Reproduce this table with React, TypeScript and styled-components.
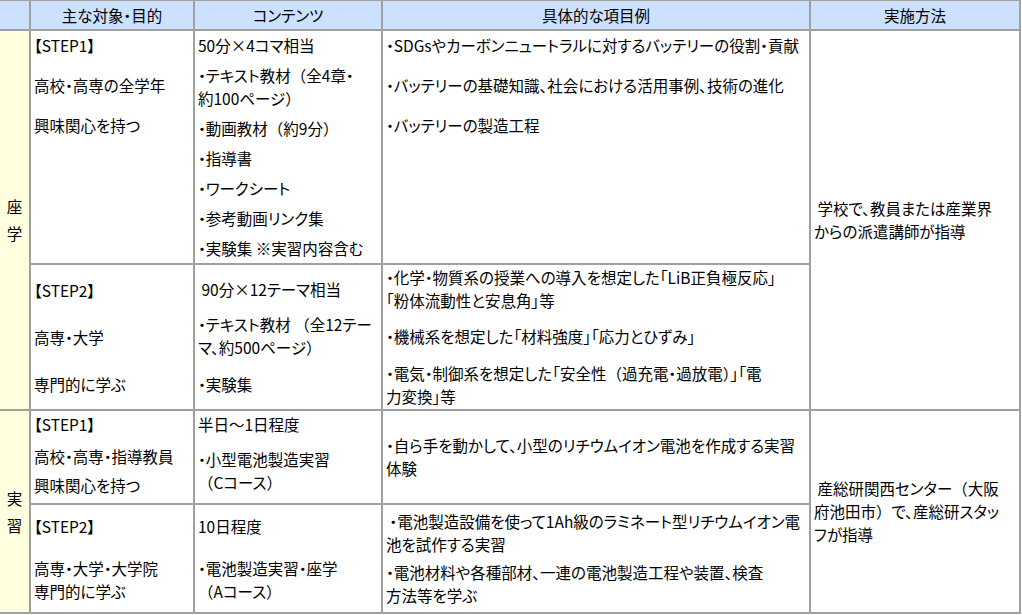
import React from 'react';
import styled, { createGlobalStyle } from 'styled-components';

const Global = createGlobalStyle`
  html, body { margin: 0; padding: 0; background: #ffffff; }
  body {
    font-family: "Noto Sans CJK JP", "Noto Sans", sans-serif;
    color: #000;
    overflow: hidden;
  }
`;

const LINE = '#a0a0a0';

const Table = styled.table`
  border-collapse: separate;
  border-spacing: 0;
  table-layout: fixed;
  width: 1023px;
  margin: -1px 0 0 -2px;
  border-left: 2px solid ${LINE};
  border-top: 2px solid ${LINE};
  font-size: 15.5px;
  font-feature-settings: "palt";
  letter-spacing: 0;
`;

const Col = styled.col<{ $w: number }>`
  width: ${p => p.$w}px;
`;

const Row = styled.tr<{ $h: number }>`
  height: ${p => p.$h}px;
`;

const HeadCell = styled.th`
  box-sizing: border-box;
  border-right: 2px solid ${LINE};
  border-bottom: 2px solid ${LINE};
  background: #cce0ff;
  font-weight: normal;
  text-align: center;
  vertical-align: middle;
  padding: 0 3px;
  line-height: 22px;
  white-space: nowrap;
`;

const SideCell = styled.td`
  box-sizing: border-box;
  border-right: 2px solid ${LINE};
  border-bottom: 2px solid ${LINE};
  background: #ffffe0;
  text-align: center;
  vertical-align: middle;
  padding: 0;
  line-height: 27px;
`;

const Cell = styled.td<{ $valign?: 'top' | 'middle'; $pt?: number }>`
  box-sizing: border-box;
  border-right: 2px solid ${LINE};
  border-bottom: 2px solid ${LINE};
  background: #ffffff;
  vertical-align: ${p => p.$valign ?? 'top'};
  padding: ${p => p.$pt ?? 3}px 1px 0 3px;
  line-height: 23px;
  overflow: hidden;
`;

const Para = styled.div<{ $mt?: number }>`
  margin-top: ${p => p.$mt ?? 0}px;
  white-space: nowrap;
`;

/* full-width punctuation (parentheses keep their em-box) */
const Fw = styled.span`
  font-feature-settings: normal;
`;

type P = { lines: React.ReactNode[]; mt?: number };

const Paras: React.FC<{ items: P[] }> = ({ items }) => (
  <>
    {items.map((it, i) => (
      <Para key={i} $mt={it.mt}>
        {it.lines.map((l, j) => (
          <React.Fragment key={j}>
            {j > 0 && <br />}
            {l}
          </React.Fragment>
        ))}
      </Para>
    ))}
  </>
);

const L = (...parts: React.ReactNode[]) => (
  <>
    {parts.map((p, i) => (
      <React.Fragment key={i}>{p}</React.Fragment>
    ))}
  </>
);

export default function App() {
  return (
    <>
      <Global />
      <Table>
        <colgroup>
          <Col $w={31} />
          <Col $w={164} />
          <Col $w={188} />
          <Col $w={428} />
          <Col $w={210} />
        </colgroup>
        <thead>
          <Row $h={30}>
            <HeadCell></HeadCell>
            <HeadCell>主な対象・目的</HeadCell>
            <HeadCell>コンテンツ</HeadCell>
            <HeadCell>具体的な項目例</HeadCell>
            <HeadCell>実施方法</HeadCell>
          </Row>
        </thead>
        <tbody>
          <Row $h={234}>
            <SideCell rowSpan={2}>座<br />学</SideCell>
            <Cell>
              <Paras
                items={[
                  { lines: ['【STEP1】'] },
                  { lines: ['高校・高専の全学年'], mt: 17 },
                  { lines: ['興味関心を持つ'], mt: 17 },
                ]}
              />
            </Cell>
            <Cell>
              <Paras
                items={[
                  { lines: ['50分×4コマ相当'] },
                  { lines: [L('・テキスト教材', <Fw>（</Fw>, '全4章・'), L('約100ページ', <Fw>）</Fw>)], mt: 7 },
                  { lines: [L('・動画教材', <Fw>（</Fw>, '約9分', <Fw>）</Fw>)], mt: 7 },
                  { lines: ['・指導書'], mt: 7 },
                  { lines: ['・ワークシート'], mt: 7 },
                  { lines: ['・参考動画リンク集'], mt: 7 },
                  { lines: ['・実験集 ※実習内容含む'], mt: 7 },
                ]}
              />
            </Cell>
            <Cell>
              <Paras
                items={[
                  { lines: ['・SDGsやカーボンニュートラルに対するバッテリーの役割・貢献'] },
                  { lines: ['・バッテリーの基礎知識、社会における活用事例、技術の進化'], mt: 17 },
                  { lines: ['・バッテリーの製造工程'], mt: 17 },
                ]}
              />
            </Cell>
            <Cell rowSpan={2} $valign="middle" $pt={0}>
              <Paras items={[{ lines: ['\u00a0学校で、教員または産業界', 'からの派遣講師が指導'] }]} />
            </Cell>
          </Row>
          <Row $h={146}>
            <Cell $valign="middle" $pt={0}>
              <Paras
                items={[
                  { lines: ['【STEP2】'] },
                  { lines: ['高専・大学'], mt: 24 },
                  { lines: ['専門的に学ぶ'], mt: 24 },
                ]}
              />
            </Cell>
            <Cell $valign="middle" $pt={0}>
              <Paras
                items={[
                  { lines: ['\u00a090分×12テーマ相当'] },
                  { lines: [L('・テキスト教材 ', <Fw>（</Fw>, '全12テー'), L('マ、約500ページ', <Fw>）</Fw>)], mt: 12 },
                  { lines: ['・実験集'], mt: 14 },
                ]}
              />
            </Cell>
            <Cell $valign="middle" $pt={0}>
              <Paras
                items={[
                  { lines: ['・化学・物質系の授業への導入を想定した「LiB正負極反応」', '「粉体流動性と安息角」等'] },
                  { lines: ['・機械系を想定した「材料強度」「応力とひずみ」'], mt: 13 },
                  {
                    lines: [
                      L('・電気・制御系を想定した「安全性', <Fw>（</Fw>, '過充電・過放電', <Fw>）</Fw>, '」「電'),
                      '力変換」等',
                    ],
                    mt: 14,
                  },
                ]}
              />
            </Cell>
          </Row>
          <Row $h={94}>
            <SideCell rowSpan={2}>実<br />習</SideCell>
            <Cell $pt={2}>
              <Paras
                items={[
                  { lines: ['【STEP1】'] },
                  { lines: ['高校・高専・指導教員'], mt: 9 },
                  { lines: ['興味関心を持つ'], mt: 6 },
                ]}
              />
            </Cell>
            <Cell $pt={2}>
              <Paras
                items={[
                  { lines: ['半日～1日程度'] },
                  { lines: ['・小型電池製造実習', L(<Fw>（</Fw>, 'Cコース', <Fw>）</Fw>)], mt: 12 },
                ]}
              />
            </Cell>
            <Cell $valign="middle" $pt={0}>
              <Paras items={[{ lines: ['・自ら手を動かして、小型のリチウムイオン電池を作成する実習', '体験'] }]} />
            </Cell>
            <Cell rowSpan={2} $valign="middle" $pt={0}>
              <Paras
                items={[
                  {
                    lines: [
                      L('\u00a0産総研関西センター', <Fw>（</Fw>, '大阪'),
                      L('府池田市', <Fw>）</Fw>, 'で、産総研スタッ'),
                      'フが指導',
                    ],
                  },
                ]}
              />
            </Cell>
          </Row>
          <Row $h={109}>
            <Cell $valign="middle" $pt={0}>
              <Paras
                items={[
                  { lines: ['【STEP2】'] },
                  { lines: ['高専・大学・大学院', '専門的に学ぶ'], mt: 19 },
                ]}
              />
            </Cell>
            <Cell $valign="middle" $pt={0}>
              <Paras
                items={[
                  { lines: ['10日程度'] },
                  { lines: ['・電池製造実習・座学', L(<Fw>（</Fw>, 'Aコース', <Fw>）</Fw>)], mt: 19 },
                ]}
              />
            </Cell>
            <Cell $valign="middle" $pt={0}>
              <Paras
                items={[
                  { lines: ['\u00a0・電池製造設備を使って1Ah級のラミネート型リチウムイオン電', '池を試作する実習'] },
                  { lines: ['・電池材料や各種部材、一連の電池製造工程や装置、検査', '方法等を学ぶ'], mt: 5 },
                ]}
              />
            </Cell>
          </Row>
        </tbody>
      </Table>
    </>
  );
}
